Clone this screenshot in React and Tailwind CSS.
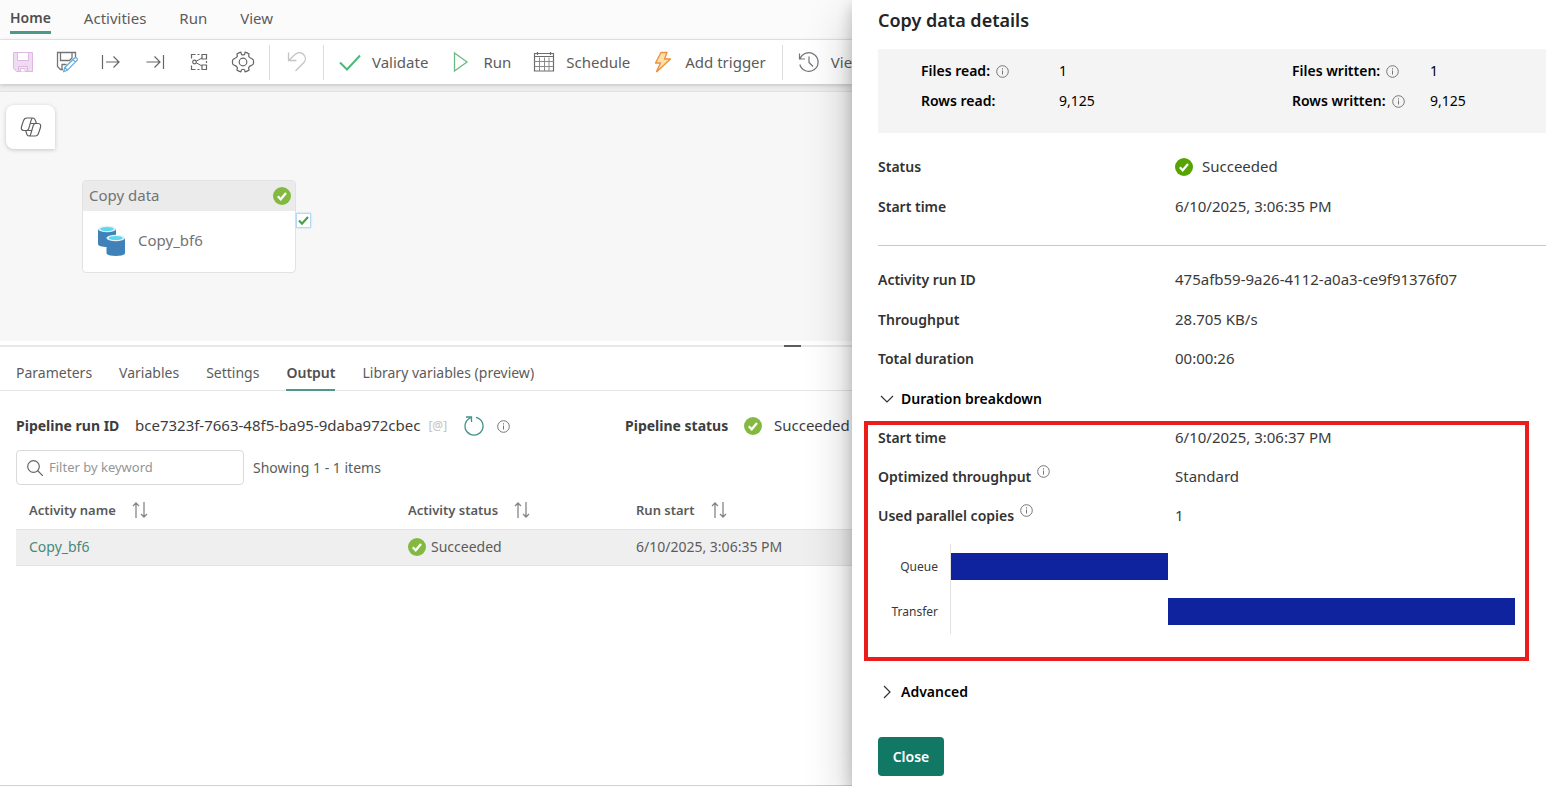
import React from "react";

function Icon({ size = 22, className = "", children }) {
  return (
    <svg
      width={size}
      height={size}
      viewBox={`0 0 ${size} ${size}`}
      fill="none"
      aria-hidden="true"
      className={`shrink-0 ${className}`}
    >
      {children}
    </svg>
  );
}

const SaveIcon = () => (
  <Icon>
    <path d="M1.500 1.500h19v19h-16l-3-3z" fill="#f0dcf2" stroke="#ddb8e0" />
    <path d="M5.500 1.500h11v8h-11z" fill="#fff" stroke="#ddb8e0" />
    <path d="M8.500 16.500h5v4h-5z" fill="#fff" />
    <path d="M6.500 20.500v-5h9v5M8.500 20.500v-3h4.500v3" stroke="#ddb8e0" />
  </Icon>
);

const SaveAsIcon = () => (
  <Icon>
    <path d="M7 18.500H4.500l-3-3v-14h18v5M4.500 1.500v8h9l2.500-2.500v-5.500M6 18.500v-5h4.500" stroke="#757575" strokeWidth="1.300" />
    <path d="M7.500 20.800l1.300-4.300L18.300 7.300c.8-.8 1.800-.8 2.500-.1.800.8.700 1.700 0 2.500l-9.400 9.500zM8.800 16.500l2.600 2.700M17 8.700l2.500 2.500" fill="#fff" stroke="#5aaae0" strokeWidth="1.200" strokeLinejoin="round" />
  </Icon>
);

const ArrowFromIcon = () => (
  <Icon>
    <path d="M2.500 4v14M6 11h13M13.500 5.500L19 11l-5.500 5.500" stroke="#666" strokeWidth="1.200" />
  </Icon>
);

const ArrowToIcon = () => (
  <Icon>
    <path d="M19.500 4v14M2.500 11H16M10.500 5.500L16 11l-5.500 5.500" stroke="#666" strokeWidth="1.200" />
  </Icon>
);

const FlowIcon = () => (
  <Icon>
    <path d="M7.500 3.500h-4v4M3.500 14.500v4h4M14 3.500h4.500v4.500h-4.500zM14 14h4.500v4.500h-4.500zM9.500 3.500h2M9.500 18.500h2M18.500 10v2" stroke="#666" strokeWidth="1.200" />
    <circle cx="6.500" cy="11" r="1.800" stroke="#666" strokeWidth="1.200" />
    <path d="M8.200 10.200L14 7M8.200 11.800L14 15" stroke="#666" />
  </Icon>
);

const GearIcon = () => (
  <Icon size={24}>
    <path
      d="M9.900 2.200L10.400 4.400Q12 5.300 13.600 4.400L14.100 2.200Q16.300 2.700 18.100 4L17.600 6.300Q18.700 8.300 20.700 8.500L22.300 9.900Q22.900 11.500 22.300 14.100L20.700 15.400Q18.600 15.700 17.500 17.700L18.100 20Q16.300 21.400 14.100 21.900L13.500 19.700Q12 18.800 10.500 19.700L9.900 21.900Q7.700 21.400 5.900 20L6.500 17.700Q5.400 15.700 3.300 15.400L1.700 14.100Q1.100 12 1.700 9.900L3.300 8.500Q5.300 8.300 6.400 6.300L5.900 4Q7.700 2.700 9.900 2.200z"
      stroke="#666"
      strokeWidth="1.200"
      strokeLinejoin="round"
    />
    <circle cx="12" cy="12" r="3.800" stroke="#666" strokeWidth="1.200" />
  </Icon>
);

const UndoIcon = () => (
  <Icon>
    <path d="M2.500 1.500v8h8M2.500 9.500L9 3.500c3-2.600 6.500-2.200 8.600 0 2.300 2.400 2.200 5.800.3 8L9.500 20" stroke="#c4c4c4" strokeWidth="1.300" />
  </Icon>
);

const ValidateIcon = () => (
  <Icon>
    <path d="M1 11.500L8 18.500L21 4.500" stroke="#4cb978" strokeWidth="2" />
  </Icon>
);

const PlayIcon = () => (
  <Icon>
    <path d="M4.500 2v18L17 11z" stroke="#6cb982" strokeWidth="1.300" />
  </Icon>
);

const CalendarIcon = () => (
  <Icon>
    <path d="M1.500 2.500h19v17.500h-19zM1.500 5.500h19M4.500 1v3M17.500 1v3" stroke="#6c6c6c" strokeWidth="1.200" />
    <path d="M6.500 6.500V20M11.500 6.500V20M16 6.500V20M1.500 10.500h19M1.500 15.500h19" stroke="#8a8a8a" />
  </Icon>
);

const BoltIcon = () => (
  <Icon>
    <path d="M9 1.500h6L12.500 8h6L5 20.500h-.5L8.500 12h-5z" fill="#fce0a8" stroke="#ee8f3c" strokeWidth="1.300" strokeLinejoin="round" />
  </Icon>
);

const HistoryIcon = () => (
  <Icon>
    <path d="M1.500 2.500v5.500h5.500M2 8a9.300 9.300 0 1 1-.2 5.500M11 5.500v6l4 4" stroke="#747474" strokeWidth="1.200" />
  </Icon>
);

const CopilotIcon = () => (
  <Icon>
    <g stroke="#5f5f5f" strokeWidth="1.200" strokeLinejoin="round">
      <path d="M13 2H6.800C5 2 4 3.200 3.400 4.900L1.700 10c-.9 2.900-.2 4.500 2 4.500h2.700c1.400 0 2-.8 2.400-2.200l2.300-8C11.500 2.800 12 2 13 2c1.300 0 1.900.8 2.300 2.200l1 3" />
      <path d="M9 20h6.200c1.800 0 2.800-1.200 3.400-2.900l1.700-5.100c.9-2.900.2-4.500-2-4.500h-2.700c-1.400 0-2 .8-2.400 2.200l-2.300 8C10.500 19.200 10 20 9 20c-1.300 0-1.900-.8-2.300-2.200l-1-3.300" />
      <path d="M10.200 7.500h5.400M6.400 14.500h5.400" />
    </g>
  </Icon>
);

function CheckCircle({ size = 18, color = "#84b941" }) {
  return (
    <svg width={size} height={size} viewBox="0 0 18 18" aria-hidden="true" className="shrink-0">
      <circle cx="9" cy="9" r="9" fill={color} />
      <path d="M4.800 9.300l2.900 3L13 6" fill="none" stroke="#fff" strokeWidth="2.200" />
    </svg>
  );
}

function InfoIcon({ className = "" }) {
  return (
    <svg width="13" height="13" viewBox="0 0 13 13" fill="none" aria-hidden="true" className={`shrink-0 ${className}`}>
      <circle cx="6.500" cy="6.500" r="5.800" stroke="#757575" />
      <path d="M6.500 5.500v4M6.500 3.200v1.300" stroke="#757575" />
    </svg>
  );
}

const SortIcon = () => (
  <svg width="16" height="16" viewBox="0 0 16 16" fill="none" aria-hidden="true" className="shrink-0">
    <path d="M4 16V1M1 4l3-3 3 3M12 0v15M9 12l3 3 3-3" stroke="#868686" strokeWidth="1.300" />
  </svg>
);

const DatabasesIcon = () => (
  <svg width="28" height="32" viewBox="0 0 28 32" aria-hidden="true" className="shrink-0">
    <path d="M1 4v15c0 2 4 3 9 3s9-1 9-3V4z" fill="#3f82ba" />
    <ellipse cx="10" cy="4" rx="9" ry="3.200" fill="#e4f0f4" />
    <ellipse cx="10" cy="4" rx="6.800" ry="2" fill="#5cd8ec" />
    <path d="M9.500 13v15c0 2 4 3 9.300 3s9.200-1 9.200-3V13z" fill="#3f82ba" />
    <ellipse cx="18.700" cy="13" rx="9.300" ry="3.300" fill="#e4f0f4" />
    <ellipse cx="18.700" cy="13" rx="7" ry="2" fill="#5cd8ec" />
  </svg>
);

function TopTabs() {
  return (
    <nav className="flex h-10 items-start gap-[33px] border-b border-[#ebebeb] bg-[#fbfbfb] pl-[10px] pt-2 text-[15px]">
      <a href="#home" className="h-[26px] border-b-3 border-[#4c998b] text-sm leading-5 font-semibold text-[#4f4f4f]">Home</a>
      {["Activities", "Run", "View"].map((t) => (
        <a key={t} href={`#${t}`} className="leading-5">{t}</a>
      ))}
    </nav>
  );
}

const ICON_TOOLS = [
  ["Save", SaveIcon],
  ["Save as", SaveAsIcon],
  ["Expand from start", ArrowFromIcon],
  ["Expand to end", ArrowToIcon],
  ["Auto align", FlowIcon],
  ["Settings", GearIcon],
];

function ToolButton({ icon: I, children }) {
  return (
    <button className="flex shrink-0 items-center gap-[11px] whitespace-nowrap leading-5">
      <I />
      {children}
    </button>
  );
}

function Toolbar() {
  return (
    <div className="relative flex h-11 items-center bg-white pl-px text-[15px] shadow-[0_1px_4px_rgba(0,0,0,0.2)]">
      {ICON_TOOLS.map(([label, I]) => (
        <button key={label} aria-label={label} className="flex h-8 w-11 shrink-0 items-center justify-center">
          <I />
        </button>
      ))}
      <div className="ml-1 h-[35px] w-px shrink-0 bg-[#dcdcdc]" />
      <button aria-label="Undo" className="flex w-[53px] shrink-0 justify-center"><UndoIcon /></button>
      <div className="h-[35px] w-px shrink-0 bg-[#dcdcdc]" />
      <div className="flex shrink-0 items-center gap-[22px] pl-[15px] pr-4">
        <ToolButton icon={ValidateIcon}>Validate</ToolButton>
        <ToolButton icon={PlayIcon}>Run</ToolButton>
        <ToolButton icon={CalendarIcon}>Schedule</ToolButton>
        <ToolButton icon={BoltIcon}>Add trigger</ToolButton>
      </div>
      <div className="h-[35px] w-px shrink-0 bg-[#dcdcdc]" />
      <div className="flex shrink-0 pl-[15px]">
        <ToolButton icon={HistoryIcon}>View</ToolButton>
      </div>
    </div>
  );
}

function Canvas() {
  return (
    <div className="relative h-[249px] bg-[#f7f7f7]">
      <button
        aria-label="Copilot"
        className="absolute left-[6px] top-[13px] flex h-11 w-[49px] items-center justify-center rounded-lg rounded-br-none bg-white shadow-[0_1px_4px_rgba(0,0,0,0.2)]"
      >
        <CopilotIcon />
      </button>
      <div className="absolute left-[82px] top-[88px] w-[214px] overflow-hidden rounded-sm border border-[#e2e2e2] bg-white text-[15px] text-[#737373]">
        <div className="flex h-[30px] items-center justify-between bg-[#ebebeb] pl-[6px] pr-1">
          <span>Copy data</span>
          <CheckCircle />
        </div>
        <div className="flex h-[61px] items-center gap-[13px] pb-[2px] pl-[14px]">
          <DatabasesIcon />
          <span>Copy_bf6</span>
        </div>
      </div>
      <div className="absolute left-[296px] top-[121px] flex size-[15px] items-center justify-center border border-[#b5d9f3] bg-white shadow-[0_0_2px_#b5d9f3]">
        <svg width="11" height="11" viewBox="0 0 11 11" fill="none" aria-hidden="true">
          <path d="M1 5.500l3 3.200L10 2" stroke="#46a04a" strokeWidth="2.200" />
        </svg>
      </div>
    </div>
  );
}

function PanelTabs() {
  return (
    <nav className="flex h-11 items-end gap-[27px] whitespace-nowrap border-b border-[#e6e6e6] pl-4">
      {["Parameters", "Variables", "Settings", "Output", "Library variables (preview)"].map((t) =>
        t === "Output" ? (
          <a key={t} href="#output" className="-mb-px h-7 border-b-2 border-[#4c998b] font-semibold leading-5 text-[#4f4f4f]">{t}</a>
        ) : (
          <a key={t} href={`#${t}`} className="h-[27px] leading-5">{t}</a>
        )
      )}
    </nav>
  );
}

function RunSummary() {
  return (
    <div className="flex h-[59px] items-center whitespace-nowrap pl-4 pt-[11px] text-[15px] text-[#3d3d3d]">
      <div className="flex w-[609px] shrink-0 items-center">
        <span className="w-[119px] text-sm font-bold">Pipeline run ID</span>
        <span>bce7323f-7663-48f5-ba95-9daba972cbec</span>
        <span className="ml-2 text-xs leading-4 font-medium text-[#c8c8c8]">[@]</span>
        <button aria-label="Refresh" className="ml-4">
          <svg width="22" height="22" viewBox="0 0 22 22" fill="none" aria-hidden="true">
            <path d="M7.500 2.800A9 9 0 1 0 13 2.300M3 2h5.500v5" stroke="#3f938a" strokeWidth="1.300" />
          </svg>
        </button>
        <InfoIcon className="ml-3" />
      </div>
      <span className="w-[119px] shrink-0 text-sm font-bold">Pipeline status</span>
      <CheckCircle />
      <span className="ml-3">Succeeded</span>
    </div>
  );
}

function FilterRow() {
  return (
    <div className="flex items-center gap-[9px] pl-4 text-[13px]">
      <label className="flex h-[35px] w-[228px] items-center gap-[6px] rounded border border-[#dadada] pl-[10px]">
        <svg width="16" height="16" viewBox="0 0 16 16" fill="none" aria-hidden="true" className="shrink-0">
          <circle cx="6.500" cy="6.500" r="5.800" stroke="#666" strokeWidth="1.200" />
          <path d="M10.500 10.500L16 16" stroke="#666" strokeWidth="1.200" />
        </svg>
        <input
          aria-label="Filter by keyword"
          placeholder="Filter by keyword"
          className="min-w-0 flex-1 bg-transparent outline-none placeholder:text-[#959595]"
        />
      </label>
      <span className="text-sm">Showing 1 - 1 items</span>
    </div>
  );
}

function ActivityTable() {
  return (
    <div className="pl-4">
      <table className="w-full table-fixed border-collapse text-left text-sm">
        <colgroup>
          <col className="w-[379px]" />
          <col className="w-[228px]" />
          <col />
        </colgroup>
        <thead>
          <tr className="h-11 text-[13px]">
            {["Activity name", "Activity status", "Run start"].map((h) => (
              <th key={h} className="pl-[13px] pt-[7px] font-semibold text-[#5a5a5a]">
                <button className="flex items-center gap-4">{h}<SortIcon /></button>
              </th>
            ))}
          </tr>
        </thead>
        <tbody>
          <tr className="h-9 border-y border-[#e2e2e2] bg-[#efefef]">
            <td className="pl-[13px]"><a href="#activity" className="text-[#46897c]">Copy_bf6</a></td>
            <td className="pl-[13px]"><span className="flex items-center gap-[5px]"><CheckCircle />Succeeded</span></td>
            <td className="pl-[13px]">6/10/2025, 3:06:35 PM</td>
          </tr>
        </tbody>
      </table>
    </div>
  );
}

function Stat({ label, info, value }) {
  return (
    <div className="flex h-[30px] items-center">
      <dt className="flex w-[138px] items-center gap-[6px] whitespace-nowrap font-semibold">
        {label}
        {info && <InfoIcon />}
      </dt>
      <dd>{value}</dd>
    </div>
  );
}

function Detail({ label, info, height = "h-10", children }) {
  return (
    <div className={`flex items-center ${height}`}>
      <dt className="flex w-[297px] shrink-0 items-start gap-[6px] whitespace-nowrap font-semibold text-[#323232]">
        {label}
        {info && <InfoIcon className="-mt-[2px]" />}
      </dt>
      <dd className="flex items-center gap-[9px] whitespace-nowrap text-[15px] text-[#3a3a3a]">{children}</dd>
    </div>
  );
}

const PHASES = [
  { name: "Queue", start: 0, seconds: 10 },
  { name: "Transfer", start: 10, seconds: 16 },
];
const TOTAL_SECONDS = 26;

function DurationChart() {
  return (
    <div className="mt-[15px] pr-[10px]">
      {PHASES.map((p) => (
        <div key={p.name} className="flex h-[45px] text-xs text-[#3a3a3a]">
          <span className="flex w-[72px] items-center justify-end pr-3">{p.name}</span>
          <div className="flex flex-1 items-center border-l border-[#e2e2e2]">
            <div
              className="h-[27px] bg-[#10239e]"
              style={{
                marginLeft: `${(p.start / TOTAL_SECONDS) * 100}%`,
                width: `${(p.seconds / TOTAL_SECONDS) * 100}%`,
              }}
            />
          </div>
        </div>
      ))}
    </div>
  );
}

function Chevron({ open }) {
  return (
    <svg width="16" height="16" viewBox="0 0 16 16" fill="none" aria-hidden="true" className="shrink-0">
      <path d={open ? "M2 5l6 6 6-6" : "M5 2l6 6-6 6"} stroke="#333" strokeWidth="1.200" />
    </svg>
  );
}

function DetailsPanel() {
  return (
    <aside className="relative z-10 w-[694px] shrink-0 bg-white pl-[26px] text-black shadow-[0_20px_44px_rgba(0,0,0,0.24),0_5px_14px_rgba(0,0,0,0.2)]">
      <h2 className="flex h-[49px] items-start pt-2 text-lg leading-6 font-semibold text-[#242424]">Copy data details</h2>
      <dl className="grid h-[84px] grid-cols-[371px_1fr] content-start bg-[#f4f4f4] pl-[43px] pt-[7px]">
        <Stat label="Files read:" info value="1" />
        <Stat label="Files written:" info value="1" />
        <Stat label="Rows read:" value="9,125" />
        <Stat label="Rows written:" info value="9,125" />
      </dl>
      <dl className="border-b border-[#c8c8c8] pb-[18px] pt-[14px]">
        <Detail label="Status"><CheckCircle color="#57a300" />Succeeded</Detail>
        <Detail label="Start time">6/10/2025, 3:06:35 PM</Detail>
      </dl>
      <dl className="pt-[14px]">
        <Detail label="Activity run ID">475afb59-9a26-4112-a0a3-ce9f91376f07</Detail>
        <Detail label="Throughput" height="h-[39px]">28.705 KB/s</Detail>
        <Detail label="Total duration">00:00:26</Detail>
      </dl>
      <button className="flex h-10 items-center gap-[6px] pl-px font-semibold"><Chevron open />Duration breakdown</button>
      <section className="-ml-[14px] mr-[17px] mt-[2px] border-4 border-[#eb1c1c] pb-[23px] pl-[10px]">
        <dl className="flex flex-col gap-[13px]">
          <Detail label="Start time" height="h-[26px]">6/10/2025, 3:06:37 PM</Detail>
          <Detail label="Optimized throughput" info height="h-[26px]">Standard</Detail>
          <Detail label="Used parallel copies" info height="h-[26px]">1</Detail>
        </dl>
        <DurationChart />
      </section>
      <button className="mt-[11px] flex h-10 items-center gap-[6px] pl-px font-semibold"><Chevron />Advanced</button>
      <button className="mt-[25px] mb-[10px] flex h-[39px] w-[66px] items-center justify-center rounded bg-[#117865] font-semibold text-white">Close</button>
    </aside>
  );
}

export default function App() {
  return (
    <div className="flex min-h-screen overflow-hidden bg-white font-['Noto_Sans',sans-serif] text-sm text-[#5c5c5c]">
      <main className="flex min-w-0 flex-1 flex-col overflow-hidden border-b border-[#d0d0d0]">
        <TopTabs />
        <Toolbar />
        <div className="h-2 border-b border-[#e2e2e2] bg-[#ededed]" />
        <Canvas />
        <div className="mt-1 flex h-[2px] justify-end bg-[#e8e8e8] pr-[51px]">
          <div className="w-[17px] bg-[#5c5c5c]" />
        </div>
        <PanelTabs />
        <RunSummary />
        <FilterRow />
        <ActivityTable />
      </main>
      <DetailsPanel />
    </div>
  );
}
